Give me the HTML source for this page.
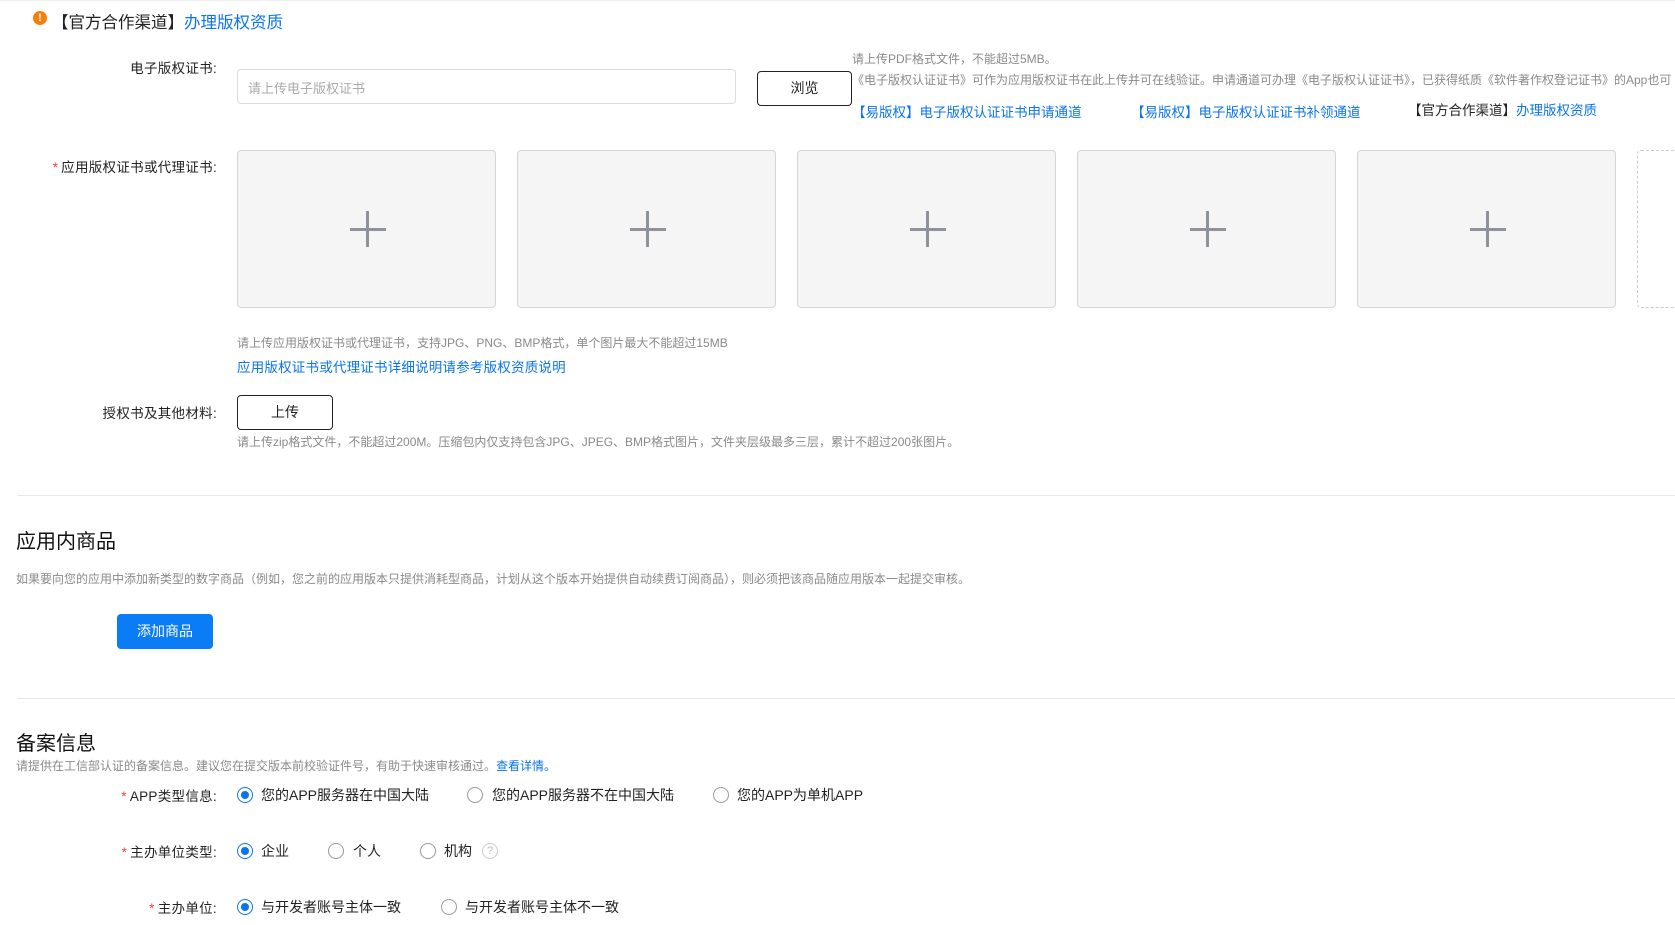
<!DOCTYPE html>
<html><head><meta charset="utf-8"><style>
*{margin:0;padding:0;box-sizing:border-box}
body{width:1675px;height:925px;overflow:hidden;background:#fff;font-family:"Liberation Sans","Noto Sans CJK SC",sans-serif;color:#222;position:relative}
.a{position:absolute;white-space:nowrap}
.lbl{font-size:13.5px;color:#222;text-align:right;letter-spacing:0.3px}
.req{color:#f5413c;margin-right:3px}
.hint{font-size:12px;color:#8a8a8a}
.link{color:#0a74f0}
.box{position:absolute;top:150px;width:259px;height:158px;background:#f5f5f5;border:1px solid #d6d6d6;border-radius:4px}
.box:before{content:"";position:absolute;left:112px;top:77px;width:36px;height:3px;background:#8e939b}
.box:after{content:"";position:absolute;left:128px;top:60px;width:3px;height:36px;background:#8e939b}
.btn{position:absolute;border:1px solid #222;border-radius:4px;background:#fff;font-size:14px;text-align:center}
.radio{position:absolute;width:16px;height:16px;border:1px solid #999;border-radius:50%}
.radio.on{border-color:#0a74f0}
.radio.on:after{content:"";position:absolute;left:3px;top:3px;width:8px;height:8px;border-radius:50%;background:#0a74f0}
.opt{font-size:14px;color:#222}
</style></head><body>
<div class="a" style="left:0;top:0;width:1675px;height:1px;background:#eee"></div>
<div class="a" style="left:33px;top:11px;width:14px;height:14px;border-radius:50%;background:#f77d0c;color:#fff;font-size:11px;font-weight:bold;text-align:center;line-height:14px">!</div>
<div class="a" style="left:52px;top:9px;font-size:16.5px">【官方合作渠道】<span class="link">办理版权资质</span></div>

<div class="a lbl" style="right:1458px;top:57px">电子版权证书:</div>
<div class="a" style="left:237px;top:69px;width:499px;height:35px;border:1px solid #dcdcdc;border-radius:4px"></div>
<div class="a" style="left:248px;top:78px;font-size:13px;color:#aaa">请上传电子版权证书</div>
<div class="btn" style="left:757px;top:71px;width:95px;height:35px;line-height:33px">浏览</div>
<div class="a hint" style="left:852px;top:50px">请上传PDF格式文件，不能超过5MB。</div>
<div class="a hint" style="left:852px;top:71px">《电子版权认证证书》可作为应用版权证书在此上传并可在线验证。申请通道可办理《电子版权认证证书》，已获得纸质《软件著作权登记证书》的App也可</div>
<div class="a link" style="left:852px;top:101px;font-size:13.5px">【易版权】电子版权认证证书申请通道</div>
<div class="a link" style="left:1131px;top:101px;font-size:13.5px">【易版权】电子版权认证证书补领通道</div>
<div class="a" style="left:1408px;top:99px;font-size:13.5px">【官方合作渠道】<span class="link">办理版权资质</span></div>

<div class="a lbl" style="right:1458px;top:156px"><span class="req">*</span>应用版权证书或代理证书:</div>
<div class="box" style="left:237px"></div>
<div class="box" style="left:517px"></div>
<div class="box" style="left:797px"></div>
<div class="box" style="left:1077px"></div>
<div class="box" style="left:1357px"></div>
<div class="a" style="left:1637px;top:150px;width:60px;height:158px;border:1px dashed #ccc;border-radius:4px"></div>
<div class="a hint" style="left:237px;top:334px">请上传应用版权证书或代理证书，支持JPG、PNG、BMP格式，单个图片最大不能超过15MB</div>
<div class="a link" style="left:237px;top:356px;font-size:13.5px;letter-spacing:0.2px">应用版权证书或代理证书详细说明请参考版权资质说明</div>

<div class="a lbl" style="right:1458px;top:402px">授权书及其他材料:</div>
<div class="btn" style="left:237px;top:395px;width:96px;height:35px;line-height:33px">上传</div>
<div class="a hint" style="left:237px;top:433px">请上传zip格式文件，不能超过200M。压缩包内仅支持包含JPG、JPEG、BMP格式图片，文件夹层级最多三层，累计不超过200张图片。</div>

<div class="a" style="left:17px;top:495px;width:1658px;height:1px;background:#e8e8e8"></div>
<div class="a" style="left:16px;top:525px;font-size:20px;color:#111">应用内商品</div>
<div class="a hint" style="left:16px;top:570px">如果要向您的应用中添加新类型的数字商品（例如，您之前的应用版本只提供消耗型商品，计划从这个版本开始提供自动续费订阅商品），则必须把该商品随应用版本一起提交审核。</div>
<div class="a" style="left:117px;top:614px;width:96px;height:35px;background:#0a7cf5;border-radius:4px;color:#fff;font-size:14px;text-align:center;line-height:35px">添加商品</div>

<div class="a" style="left:17px;top:698px;width:1658px;height:1px;background:#e8e8e8"></div>
<div class="a" style="left:16px;top:727px;font-size:20px;color:#111">备案信息</div>
<div class="a hint" style="left:16px;top:757px">请提供在工信部认证的备案信息。建议您在提交版本前校验证件号，有助于快速审核通过。<span class="link">查看详情。</span></div>

<div class="a lbl" style="right:1458px;top:785px"><span class="req">*</span>APP类型信息:</div>
<div class="radio on" style="left:237px;top:787px"></div><div class="a opt" style="left:261px;top:785px">您的APP服务器在中国大陆</div>
<div class="radio" style="left:467px;top:787px"></div><div class="a opt" style="left:492px;top:785px">您的APP服务器不在中国大陆</div>
<div class="radio" style="left:713px;top:787px"></div><div class="a opt" style="left:737px;top:785px">您的APP为单机APP</div>

<div class="a lbl" style="right:1458px;top:841px"><span class="req">*</span>主办单位类型:</div>
<div class="radio on" style="left:237px;top:843px"></div><div class="a opt" style="left:261px;top:841px">企业</div>
<div class="radio" style="left:328px;top:843px"></div><div class="a opt" style="left:353px;top:841px">个人</div>
<div class="radio" style="left:420px;top:843px"></div><div class="a opt" style="left:444px;top:841px">机构</div>
<div class="a" style="left:482px;top:843px;width:16px;height:16px;border:1px solid #ccc;border-radius:50%;color:#bbb;font-size:11px;text-align:center;line-height:14px">?</div>

<div class="a lbl" style="right:1458px;top:897px"><span class="req">*</span>主办单位:</div>
<div class="radio on" style="left:237px;top:899px"></div><div class="a opt" style="left:261px;top:897px">与开发者账号主体一致</div>
<div class="radio" style="left:441px;top:899px"></div><div class="a opt" style="left:465px;top:897px">与开发者账号主体不一致</div>
</body></html>
